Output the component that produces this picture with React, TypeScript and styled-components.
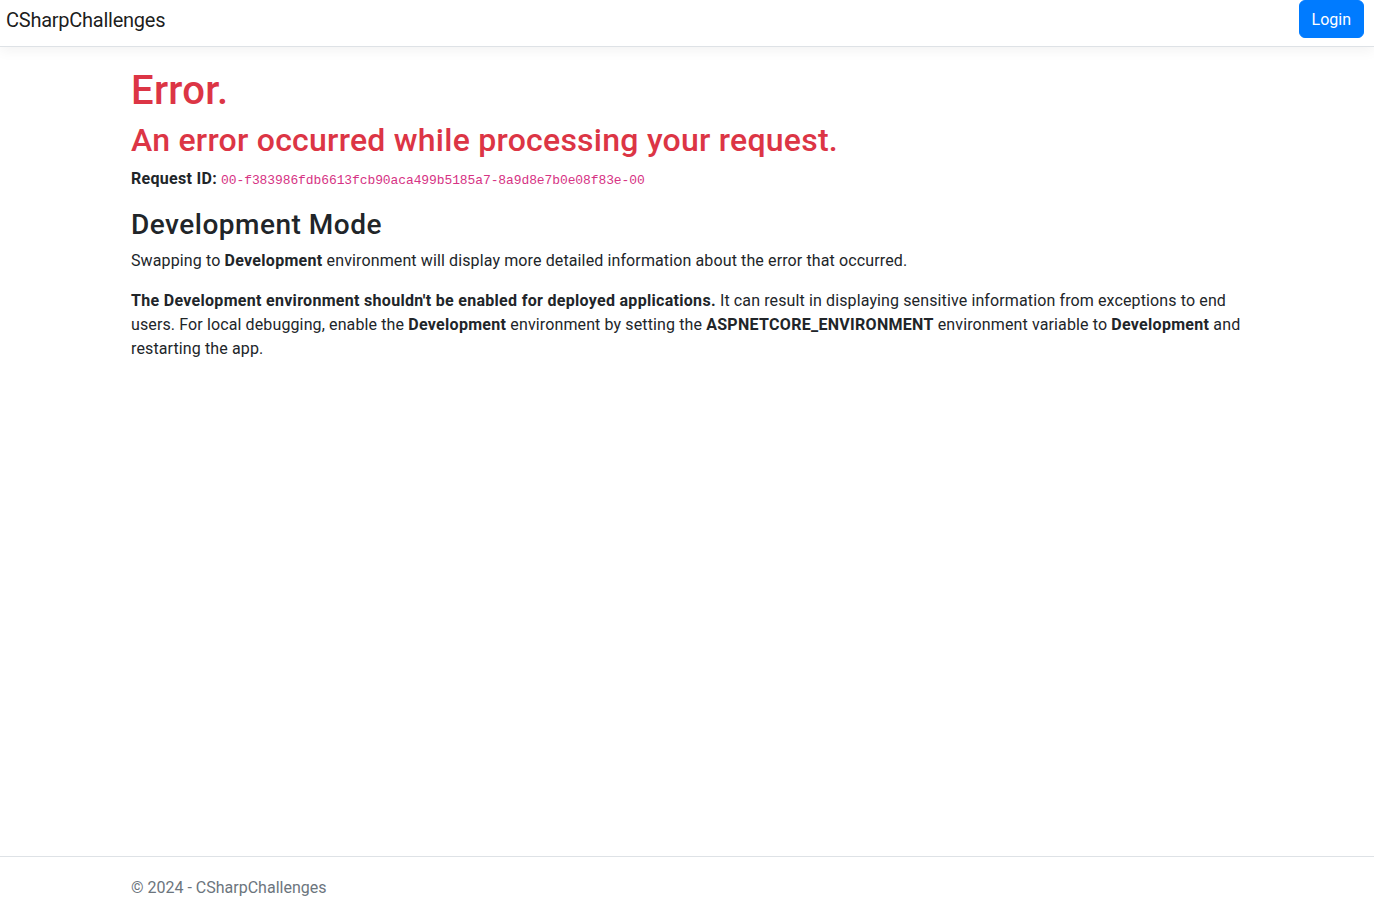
import React from "react";
import styled, { createGlobalStyle } from "styled-components";

const GlobalStyle = createGlobalStyle`
  *, *::before, *::after { box-sizing: border-box; }
  html, body { margin: 0; padding: 0; height: 100%; }
  body {
    font-family: Roboto, "Noto Sans", "Liberation Sans", sans-serif;
    font-size: 16px;
    line-height: 1.5;
    letter-spacing: 0.12px;
    color: #212529;
    background: #fff;
    overflow: hidden;
  }
`;

const Page = styled.div`
  min-height: 100vh;
  display: flex;
  flex-direction: column;
`;

const NavBar = styled.nav`
  display: flex;
  align-items: flex-start;
  justify-content: space-between;
  height: 47px;
  padding: 0 10px 0 6px;
  background: #fff;
  border-bottom: 1px solid #dee2e6;
  box-shadow: 0 4px 12px rgba(0, 0, 0, 0.05);
  margin-bottom: 18px;
`;

const Brand = styled.a`
  font-size: 20px;
  line-height: 30px;
  padding: 5px 0;
  letter-spacing: -0.25px;
  color: rgba(0, 0, 0, 0.9);
  text-decoration: none;
`;

const LoginButton = styled.button`
  font-family: inherit;
  font-size: 16px;
  line-height: 24px;
  letter-spacing: 0;
  padding: 7px 12px 5px;
  color: #fff;
  background: #007bff;
  border: 1px solid #007bff;
  border-radius: 6px;
  cursor: pointer;
`;

const Container = styled.div`
  width: 100%;
  max-width: 1140px;
  margin: 0 auto;
  padding: 0 10px 0 14px;
`;

const Main = styled.main`
  flex: 1;
  padding-bottom: 16px;
`;

const Title = styled.h1`
  margin: 0 0 6px;
  padding-top: 2px;
  font-size: 40px;
  font-weight: 500;
  line-height: 1.2;
  letter-spacing: 0.3px;
  color: #dc3545;
`;

const Subtitle = styled.h2`
  margin: 0 0 8px;
  font-size: 32px;
  font-weight: 500;
  line-height: 1.2;
  letter-spacing: 0.25px;
  color: #dc3545;
`;

const SectionTitle = styled.h3`
  margin: 0 0 7px;
  padding-top: 1px;
  font-size: 28px;
  font-weight: 500;
  line-height: 1.2;
  letter-spacing: 0.5px;
`;

const Para = styled.p`
  margin: 0 0 16px;
`;

const Strong = styled.strong`
  font-weight: 700;
  letter-spacing: 0.3px;
`;

const Code = styled.code`
  font-family: "Liberation Mono", "DejaVu Sans Mono", monospace;
  font-size: 13px;
  letter-spacing: -0.1px;
  color: #d63384;
`;

const Footer = styled.footer`
  height: 51px;
  border-top: 1px solid #dee2e6;
  padding-top: 19px;
  line-height: 24px;
  letter-spacing: 0;
  color: #6c757d;
  white-space: nowrap;
`;

export default function App() {
  return (
    <>
      <GlobalStyle />
      <Page>
        <NavBar>
          <Brand href="#">CSharpChallenges</Brand>
          <LoginButton type="button">Login</LoginButton>
        </NavBar>
        <Main>
          <Container>
            <Title>Error.</Title>
            <Subtitle>An error occurred while processing your request.</Subtitle>
            <Para>
              <Strong>Request ID:</Strong>{" "}
              <Code>00-f383986fdb6613fcb90aca499b5185a7-8a9d8e7b0e08f83e-00</Code>
            </Para>
            <SectionTitle>Development Mode</SectionTitle>
            <Para>
              Swapping to <Strong>Development</Strong> environment will display more detailed
              information about the error that occurred.
            </Para>
            <Para>
              <Strong>The Development environment shouldn't be enabled for deployed applications.</Strong>{" "}
              It can result in displaying sensitive information from exceptions to end users. For
              local debugging, enable the <Strong>Development</Strong> environment by setting the{" "}
              <Strong>ASPNETCORE_ENVIRONMENT</Strong> environment variable to{" "}
              <Strong>Development</Strong> and restarting the app.
            </Para>
          </Container>
        </Main>
        <Footer>
          <Container>&copy; 2024 - CSharpChallenges</Container>
        </Footer>
      </Page>
    </>
  );
}
